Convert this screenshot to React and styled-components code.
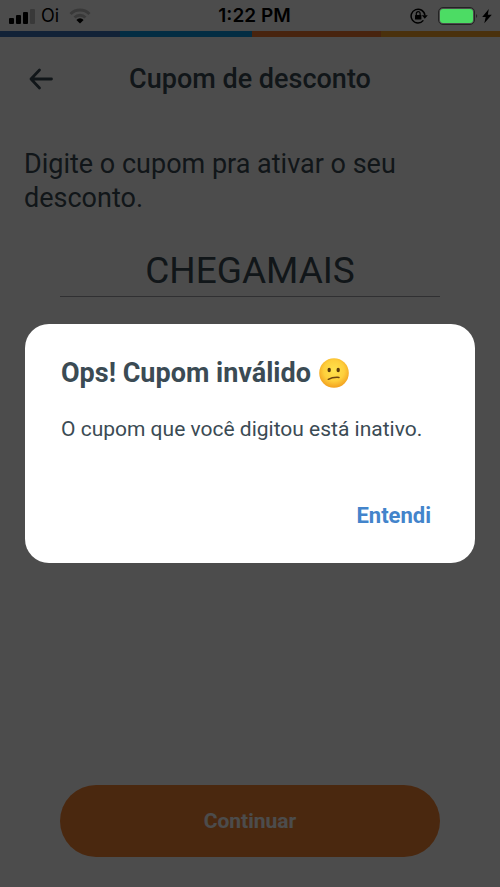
import React, { useState } from 'react'
import styled, { createGlobalStyle, ThemeProvider } from 'styled-components'

const theme = {
  text: '#3b4b54',
  blue: '#4384cb',
  orange: '#f98634',
}

const App = () => {
  const [coupon, setCoupon] = useState('CHEGAMAIS')

  return (
    <ThemeProvider theme={theme}>
      <GlobalStyle />
      <Screen>
        <StatusBar />
        <Stripes>
          <Stripe color="#3f73ba" span={120} />
          <Stripe color="#0c98e0" span={132} />
          <Stripe color="#f27a35" span={129} />
          <Stripe color="#f7a42c" span={119} />
        </Stripes>
        <Header>
          <BackButton type="button" aria-label="Voltar">
            <BackArrow />
          </BackButton>
          <Title>Cupom de desconto</Title>
        </Header>
        <Content>
          <Prompt htmlFor="coupon">
            Digite o cupom pra ativar o seu desconto.
          </Prompt>
          <CouponInput
            id="coupon"
            value={coupon}
            onChange={e => setCoupon(e.target.value)}
          />
        </Content>
        <Footer>
          <Continue type="button">Continuar</Continue>
        </Footer>
      </Screen>
      <Backdrop>
        <Modal role="alertdialog" aria-labelledby="alert-title">
          <ModalTitle id="alert-title">
            Ops! Cupom inválido
            <ConfusedFace />
          </ModalTitle>
          <Message>O cupom que você digitou está inativo.</Message>
          <Dismiss type="button">Entendi</Dismiss>
        </Modal>
      </Backdrop>
    </ThemeProvider>
  )
}

export default App

const StatusBar = () => (
  <Status>
    <Carrier>
      <svg width="26" height="16" viewBox="0 0 26 16">
        <rect x="0" y="10" width="5" height="6" rx="1" />
        <rect x="7" y="7" width="5" height="9" rx="1" />
        <rect x="14" y="4" width="5" height="12" rx="1" />
        <rect x="21" y="1" width="5" height="15" rx="1" opacity=".25" />
      </svg>
      Oi
      <svg width="22" height="16" viewBox="0 0 22 16" fill="none">
        <g stroke="#000" strokeWidth="3" opacity=".25">
          <path d="M1.5 6a13.5 13.5 0 0 1 19 0" />
          <path d="M5.5 9.5a8 8 0 0 1 11 0" />
        </g>
        <path d="M11 15.5l-3.6-3.6a5 5 0 0 1 7.2 0z" fill="#000" />
      </svg>
    </Carrier>
    <Time>1:22 PM</Time>
    <Indicators>
      <svg width="18" height="16" viewBox="0 0 18 16">
        <path
          d="M13.400 12.400A6.900 6.900 0 1 1 14.900 7.500"
          fill="none"
          stroke="#000"
          strokeWidth="1.5"
        />
        <path d="M11.8 7.2h6l-3 3.6z" />
        <rect x="5" y="7" width="6.4" height="4.6" rx=".6" />
        <path
          d="M6.3 7.2V5.6a1.9 1.9 0 0 1 3.8 0v1.6"
          fill="none"
          stroke="#000"
          strokeWidth="1.2"
        />
      </svg>
      <Battery>
        <Charge />
      </Battery>
      <svg width="16" height="16" viewBox="0 0 16 16">
        <path d="M0 6v4q2.5-2 0-4z" opacity=".5" />
        <path d="M12.8 1L6.2 9h3.500l-1.400 6.200L15.800 6.800h-4z" />
      </svg>
    </Indicators>
  </Status>
)

const BackArrow = () => (
  <svg width="26" height="22" viewBox="0 0 26 22" fill="none">
    <path
      d="M24.5 11H4M12.500 2L4 11l8.5 9"
      stroke="#3b4b54"
      strokeWidth="2.8"
      strokeLinecap="round"
      strokeLinejoin="round"
    />
  </svg>
)

const ConfusedFace = () => (
  <svg width="30" height="30" viewBox="0 0 30 30" role="img" aria-label="😕">
    <defs>
      <radialGradient id="face" cx=".5" cy=".42" r=".58">
        <stop offset="0" stopColor="#ffe34d" />
        <stop offset=".6" stopColor="#fecf3c" />
        <stop offset="1" stopColor="#f2a01f" />
      </radialGradient>
    </defs>
    <circle cx="15" cy="15" r="14.8" fill="url(#face)" />
    <ellipse cx="10.2" cy="12" rx="1.7" ry="2.2" fill="#5b3a0c" />
    <ellipse cx="19.2" cy="12" rx="1.7" ry="2.2" fill="#5b3a0c" />
    <path
      d="M9.300 21.300q4.200-2.300 10.700-1.900"
      fill="none"
      stroke="#6f4510"
      strokeWidth="1.5"
      strokeLinecap="round"
    />
  </svg>
)

const GlobalStyle = createGlobalStyle`
  * {
    box-sizing: border-box;
  }

  body {
    margin: 0;
    background: #ffffff;
    color: ${props => props.theme.text};
    font-family: Roboto, 'Liberation Sans', sans-serif;
  }

  button {
    border: 0;
    background: none;
    font-family: inherit;
    cursor: pointer;
  }
`

const Screen = styled.div`
  display: flex;
  flex-flow: column;
  min-height: 100vh;
`

const Status = styled.div`
  display: grid;
  grid-template-columns: 1fr auto 1fr;
  align-items: center;
  height: 31px;
  padding: 0 8px 0 9px;

  color: #000000;
  font-family: Inter, sans-serif;
  font-size: 18px;
`

const Carrier = styled.div`
  display: flex;
  align-items: center;
  gap: 6px;

  svg:last-child {
    margin-left: 4px;
  }
`

const Time = styled.div`
  padding-left: 8px;
  font-size: 19px;
  font-weight: 600;
`

const Indicators = styled.div`
  display: flex;
  align-items: center;
  justify-content: flex-end;
`

const Battery = styled.div`
  width: 37px;
  height: 18px;
  margin: 0 1px 0 10px;
  padding: 1px;
  border: 1px solid #777777;
  border-radius: 5px;
`

/* stays lit above the backdrop */
const Charge = styled.div`
  position: relative;
  z-index: 2;
  height: 100%;
  border-radius: 3px;
  background: #4cdc64;
`

const Stripes = styled.div`
  display: flex;
  height: 6px;
`

const Stripe = styled.div`
  flex: ${props => props.span} 1 0;
  background: ${props => props.color};
`

const Header = styled.header`
  display: grid;
  grid-template-columns: 48px 1fr 48px;
  align-items: center;
  height: 84px;
  padding: 0 16px;
`

const BackButton = styled.button`
  display: flex;
  align-items: center;
  justify-content: center;
  height: 48px;
  padding: 0;
`

const Title = styled.h1`
  margin: 0;
  font-size: 27px;
  font-weight: 500;
  text-align: center;
`

const Content = styled.main`
  display: flex;
  flex: 1;
  flex-flow: column;
  padding: 26px 24px;
`

const Prompt = styled.label`
  font-size: 27px;
  line-height: 34px;
`

const CouponInput = styled.input`
  height: 56px;
  margin: 26px 36px 0;
  padding: 4px 0 0;
  border: 0;
  border-bottom: 1px solid #a0a0a8;
  border-radius: 0;
  outline: 0;
  background: none;

  color: inherit;
  font-family: inherit;
  font-size: 37px;
  font-weight: 400;
  text-align: center;
`

const Footer = styled.footer`
  display: flex;
  padding: 0 60px 30px;
`

const Continue = styled.button`
  flex: 1;
  height: 72px;
  border-radius: 36px;
  background: ${props => props.theme.orange};

  color: #ffffff;
  font-size: 21px;
  font-weight: 700;
`

const Backdrop = styled.div`
  position: fixed;
  inset: 0;
  z-index: 1;
  display: flex;
  align-items: center;
  justify-content: center;
  padding: 0 25px;
  background: rgba(0, 0, 0, 0.7);
`

const Modal = styled.div`
  display: flex;
  flex: 1;
  flex-flow: column;
  padding: 32px 36px 28px;
  border-radius: 24px;
  background: #ffffff;
`

const ModalTitle = styled.h2`
  display: flex;
  align-items: center;
  gap: 8px;
  margin: 0;
  font-size: 27px;
  font-weight: 700;
  line-height: 34px;
`

const Message = styled.p`
  margin: 26px 0 0;
  font-size: 21px;
  line-height: 27px;
`

const Dismiss = styled.button`
  align-self: flex-end;
  height: 40px;
  margin-top: 52px;
  padding: 0 8px;

  color: ${props => props.theme.blue};
  font-size: 22px;
  font-weight: 700;
`
